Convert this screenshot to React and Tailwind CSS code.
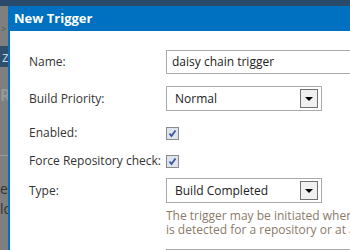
import React from 'react';

const font = { fontFamily: '"Open Sans", "Noto Sans", sans-serif' };

const Select = ({ value }) => (
  <div className="w-[156px] h-[25px] border border-[#a9a9a9] bg-white flex items-center justify-between pl-[8px] pr-[3px]">
    <span className="text-[12px] text-[#222]">{value}</span>
    <div className="w-[18px] h-[19px] border border-[#707070] bg-[#f0f0f0] flex items-center justify-center">
      <div className="w-0 h-0 border-l-[4px] border-r-[4px] border-t-[4px] border-l-transparent border-r-transparent border-t-black" />
    </div>
  </div>
);

const Check = () => (
  <div className="w-[13px] h-[13px] border border-[#8a8a8a] bg-[#dfe4ee] flex items-center justify-center">
    <svg width="9" height="9" viewBox="0 0 9 9">
      <path d="M1.5 4.5 L3.5 7 L7.5 1.5" fill="none" stroke="#3a55a0" strokeWidth="1.8" />
    </svg>
  </div>
);

export default function App() {
  return (
    <div className="relative w-[350px] h-[250px] overflow-hidden bg-[#7f7f7f]" style={font}>
      {/* page behind the overlay */}
      <div className="h-[6px] bg-[#2a4a6b]" />
      <div className="text-[#555] text-[9px] pl-[1px] mt-[16px]">&gt;</div>
      <div className="h-[21px] mt-[10px] bg-[#2f4f6e] text-[#c8d3de] text-[14px] leading-[21px] pl-[2px]">za</div>
      <div className="text-[#999] text-[16px] font-bold mt-[20px] leading-[16px]">R</div>
      <div className="h-px bg-[#9a9a9a] mt-[52px]" />
      <div className="text-[#333] text-[14px] leading-[20px] mt-[23px]">ed<br />lo</div>

      {/* dialog */}
      <div className="absolute left-[8px] top-[6px] right-0 bottom-0 bg-white border-l-2 border-[#0070c0]">
        <div className="h-[25px] -ml-[2px] bg-[#0070c0] text-white font-bold text-[13px] leading-[25px] pl-[6px]">
          New Trigger
        </div>
        <div className="grid grid-cols-[137px_1fr] pl-[19px] pt-[19px] text-[12px] text-[#333] items-center">
          <div className="h-[24px] leading-[24px]">Name:</div>
          <div className="h-[24px] border border-[#a9a9a9] border-r-0 pl-[5px] leading-[22px] text-[#222]">daisy chain trigger</div>

          <div className="mt-[12px] leading-[25px]">Build Priority:</div>
          <div className="mt-[12px]"><Select value="Normal" /></div>

          <div className="mt-[13px]">Enabled:</div>
          <div className="mt-[13px]"><Check /></div>

          <div className="mt-[10px]">Force Repository check:</div>
          <div className="mt-[10px]"><Check /></div>

          <div className="mt-[8px] self-start leading-[25px]">Type:</div>
          <div className="mt-[8px] overflow-hidden">
            <Select value="Build Completed" />
            <div className="text-[12px] leading-[14px] text-[#8a7a6a] mt-[6px] whitespace-nowrap">
              The trigger may be initiated when a change<br />is detected for a repository or at a
            </div>
            <div className="h-[20px] border border-[#a9a9a9] border-r-0 mt-[12px]" />
          </div>
        </div>
      </div>
    </div>
  );
}
